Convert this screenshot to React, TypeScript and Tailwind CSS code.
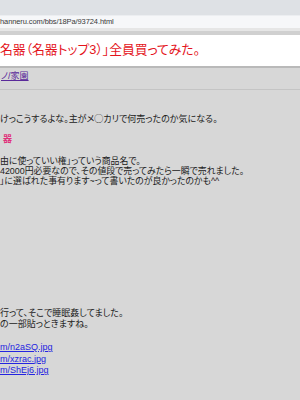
import React from "react";

// Liberation Sans first keeps the line boxes tight; kana/kanji fall back to Noto CJK (proportional via palt)
const jp = "font-['Liberation_Sans','Noto_Sans_CJK_JP',sans-serif] [font-feature-settings:'palt']";

const App = () => {
  return (
    <div className={`w-[300px] h-[400px] overflow-hidden flex flex-col bg-[#d7d7d7] ${jp}`}>
      {/* browser chrome */}
      <div className="h-[15px] bg-[#dee1e5]"></div>
      <div className="h-[13px] bg-[#f6f7f9] border-t border-[#eceef1] flex items-center">
        <span className="text-[7.5px] leading-none text-[#3a3a3a] tracking-[-0.1px]">
          hanneru.com/bbs/18Pa/93724.html
        </span>
      </div>
      <div className="h-[3px] bg-[#e6e6e6]"></div>
      <div className="h-[4px] bg-[#d0d0d0]"></div>

      {/* title */}
      <div className="h-[31px] bg-white flex items-center">
        <h1 className="text-[12.8px] leading-none text-[#e4141b] whitespace-nowrap">
          名器（名器トップ3）」全員買ってみた。
        </h1>
      </div>
      <div className="h-[2px] bg-[#b9b9b9]"></div>

      {/* body */}
      <div className="flex-1 text-[9px] text-[#222] whitespace-nowrap">
        <div className="mt-[3px] leading-[10px] pl-[1px]">
          <a className="text-[#5a2a9a] underline">ノ/家園</a>
        </div>
        <div className="mt-[8px] border-t border-[#c4c4c4]"></div>

        <p className="mt-[24px] leading-[10px]">けっこうするよな。主がメ◯カリで何売ったのか気になる。</p>

        <p className="mt-[10px] leading-[10px] pl-[3px] text-[#e0307a] font-bold">器</p>

        <div className="mt-[12px] leading-[10px] text-[8.9px]">
          <p>由に使っていい権」っていう商品名で。</p>
          <p>42000円必要なので、その値段で売ってみたら一瞬で売れました。</p>
          <p>」に選ばれた事有ります~って書いたのが良かったのかも^^</p>
        </div>

        <div className="mt-[122px] leading-[11px]">
          <p>行って、そこで睡眠姦してました。</p>
          <p>の一部貼っときますね。</p>
        </div>

        <div className="mt-[12px] leading-[11.5px] text-[#2424e0]">
          <a className="block underline">m/n2aSQ.jpg</a>
          <a className="block underline">m/xzrac.jpg</a>
          <a className="block underline">m/ShEj6.jpg</a>
        </div>
      </div>
    </div>
  );
};

export default App;
